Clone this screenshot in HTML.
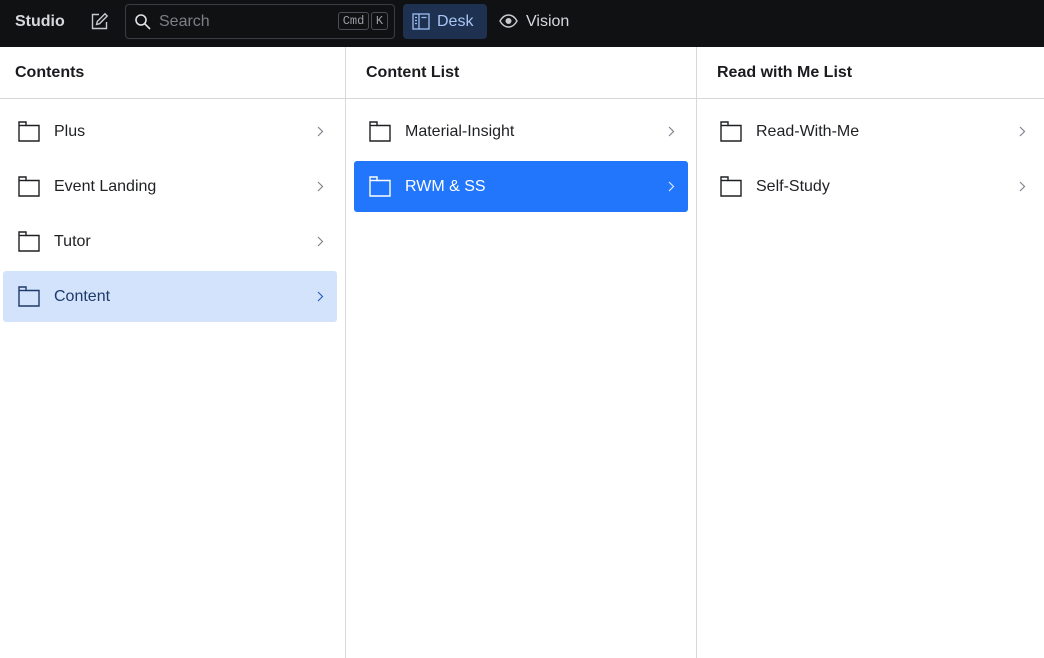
<!DOCTYPE html>
<html><head><meta charset="utf-8"><style>
*{margin:0;padding:0;box-sizing:border-box}
body{width:1044px;height:658px;overflow:hidden;background:#fff;font-family:"Liberation Sans",sans-serif;position:relative}
.top{position:absolute;left:0;top:0;width:1044px;height:47px;background:#101112}
.abs{position:absolute}
.col{position:absolute;top:47px;height:611px;border-right:1px solid #d6d8dc}
.hd{position:absolute;left:0;top:0;right:0;height:52px;border-bottom:1px solid #d6d8dc;font-size:16px;font-weight:bold;color:#1a1b1e;padding:17px 0 0 15px}
.row{position:absolute;height:51px;border-radius:3px;font-size:16px;color:#1f2023}
.row .t{position:absolute;left:51px;top:17px}
.row svg.f{position:absolute;left:15px;top:15px}
.row svg.c{position:absolute;right:13px;top:20px}
</style></head><body>
<div class="top">
  <div class="abs" style="left:15px;top:13px;font-size:16px;font-weight:bold;color:#d6d8dc">Studio</div>
  <svg class="abs" style="left:90px;top:12px" width="19" height="19" viewBox="0 0 19 19" fill="none" stroke="#c8cad0" stroke-width="1.4"><path d="M9 2.5H2.5V16.5H16.5V10"/><path d="M15 1.8L17.2 4 9.5 11.7 6.6 12.4 7.3 9.5Z"/></svg>
  <div class="abs" style="left:125px;top:4px;width:270px;height:35px;border:1px solid #3a3d44;border-radius:4px"></div>
  <svg class="abs" style="left:134px;top:13px" width="18" height="18" viewBox="0 0 18 18" fill="none" stroke="#e0e2e6" stroke-width="1.6"><circle cx="7" cy="7" r="5"/><path d="M10.7 10.7L16 16"/></svg>
  <div class="abs" style="left:159px;top:13px;font-size:16px;color:#7b7f88">Search</div>
  <div class="abs" style="left:338px;top:12px;width:31px;height:18px;border:1px solid #4a4d55;border-radius:3px;font-family:'Liberation Mono',monospace;font-size:12px;color:#9a9ea6;text-align:center;line-height:16px">Cmd</div>
  <div class="abs" style="left:371px;top:12px;width:17px;height:18px;border:1px solid #4a4d55;border-radius:3px;font-family:'Liberation Mono',monospace;font-size:12px;color:#9a9ea6;text-align:center;line-height:16px">K</div>
  <div class="abs" style="left:403px;top:4px;width:84px;height:35px;background:#1e3150;border-radius:4px"></div>
  <svg class="abs" style="left:412px;top:13px" width="18" height="17" viewBox="0 0 18 17" fill="none" stroke="#9dbdf0" stroke-width="1.3"><rect x="1" y="1" width="16" height="15"/><path d="M7 1V16M3 4.5h2M3 7.5h2M3 10.5h2M9.5 4.5h5"/></svg>
  <div class="abs" style="left:437px;top:13px;font-size:16px;color:#a8c6f5">Desk</div>
  <svg class="abs" style="left:499px;top:14px" width="19" height="14" viewBox="0 0 19 14" fill="none" stroke="#c8cad0" stroke-width="1.4"><path d="M1 7C3.5 2.5 6.5 1 9.5 1S15.5 2.5 18 7C15.5 11.5 12.5 13 9.5 13S3.5 11.5 1 7Z"/><circle cx="9.5" cy="7" r="2.3" fill="#c8cad0"/></svg>
  <div class="abs" style="left:526px;top:13px;font-size:16px;color:#d6d8dc">Vision</div>
</div>

<div class="col" style="left:0;width:346px">
  <div class="hd">Contents</div>
  <div class="row" style="left:3px;top:59px;width:334px"><svg class="f" width="22" height="21" viewBox="0 0 22 21" fill="none" stroke="#1f2023" stroke-width="1.4"><path d="M1 1H8V4.5H21V20H1Z"/><path d="M1 4.5H8"/></svg><span class="t">Plus</span><svg class="c" width="8" height="11" viewBox="0 0 8 11" fill="none" stroke="#80848c" stroke-width="1.2"><path d="M2 1L6.5 5.5 2 10"/></svg></div>
  <div class="row" style="left:3px;top:114px;width:334px"><svg class="f" width="22" height="21" viewBox="0 0 22 21" fill="none" stroke="#1f2023" stroke-width="1.4"><path d="M1 1H8V4.5H21V20H1Z"/><path d="M1 4.5H8"/></svg><span class="t">Event Landing</span><svg class="c" width="8" height="11" viewBox="0 0 8 11" fill="none" stroke="#80848c" stroke-width="1.2"><path d="M2 1L6.5 5.5 2 10"/></svg></div>
  <div class="row" style="left:3px;top:169px;width:334px"><svg class="f" width="22" height="21" viewBox="0 0 22 21" fill="none" stroke="#1f2023" stroke-width="1.4"><path d="M1 1H8V4.5H21V20H1Z"/><path d="M1 4.5H8"/></svg><span class="t">Tutor</span><svg class="c" width="8" height="11" viewBox="0 0 8 11" fill="none" stroke="#80848c" stroke-width="1.2"><path d="M2 1L6.5 5.5 2 10"/></svg></div>
  <div class="row" style="left:3px;top:224px;width:334px;background:#d2e3fb;color:#1e3a6b"><svg class="f" width="22" height="21" viewBox="0 0 22 21" fill="none" stroke="#1e3a6b" stroke-width="1.4"><path d="M1 1H8V4.5H21V20H1Z"/><path d="M1 4.5H8"/></svg><span class="t">Content</span><svg class="c" width="8" height="11" viewBox="0 0 8 11" fill="none" stroke="#2a5fc0" stroke-width="1.2"><path d="M2 1L6.5 5.5 2 10"/></svg></div>
</div>

<div class="col" style="left:346px;width:351px">
  <div class="hd" style="padding-left:20px">Content List</div>
  <div class="row" style="left:8px;top:59px;width:334px"><svg class="f" width="22" height="21" viewBox="0 0 22 21" fill="none" stroke="#1f2023" stroke-width="1.4"><path d="M1 1H8V4.5H21V20H1Z"/><path d="M1 4.5H8"/></svg><span class="t">Material-Insight</span><svg class="c" width="8" height="11" viewBox="0 0 8 11" fill="none" stroke="#80848c" stroke-width="1.2"><path d="M2 1L6.5 5.5 2 10"/></svg></div>
  <div class="row" style="left:8px;top:114px;width:334px;background:#2276fc;color:#fff"><svg class="f" width="22" height="21" viewBox="0 0 22 21" fill="none" stroke="#fff" stroke-width="1.4"><path d="M1 1H8V4.5H21V20H1Z"/><path d="M1 4.5H8"/></svg><span class="t">RWM &amp; SS</span><svg class="c" width="8" height="11" viewBox="0 0 8 11" fill="none" stroke="#dce8ff" stroke-width="1.2"><path d="M2 1L6.5 5.5 2 10"/></svg></div>
</div>

<div class="col" style="left:697px;width:347px;border-right:none">
  <div class="hd" style="padding-left:20px">Read with Me List</div>
  <div class="row" style="left:8px;top:59px;width:334px"><svg class="f" width="22" height="21" viewBox="0 0 22 21" fill="none" stroke="#1f2023" stroke-width="1.4"><path d="M1 1H8V4.5H21V20H1Z"/><path d="M1 4.5H8"/></svg><span class="t">Read-With-Me</span><svg class="c" width="8" height="11" viewBox="0 0 8 11" fill="none" stroke="#80848c" stroke-width="1.2"><path d="M2 1L6.5 5.5 2 10"/></svg></div>
  <div class="row" style="left:8px;top:114px;width:334px"><svg class="f" width="22" height="21" viewBox="0 0 22 21" fill="none" stroke="#1f2023" stroke-width="1.4"><path d="M1 1H8V4.5H21V20H1Z"/><path d="M1 4.5H8"/></svg><span class="t">Self-Study</span><svg class="c" width="8" height="11" viewBox="0 0 8 11" fill="none" stroke="#80848c" stroke-width="1.2"><path d="M2 1L6.5 5.5 2 10"/></svg></div>
</div>
</body></html>
